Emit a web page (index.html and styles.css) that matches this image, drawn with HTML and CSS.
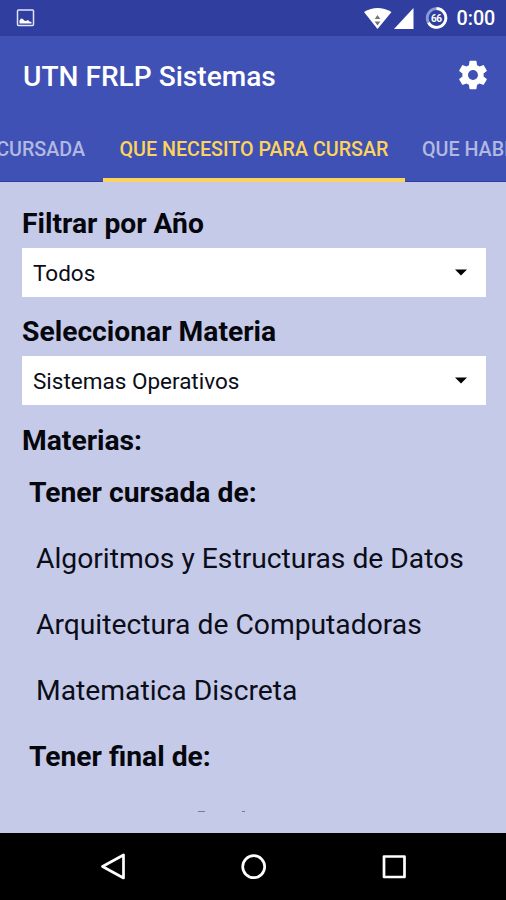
FILE: index.html
```html
<!DOCTYPE html>
<html lang="es">
<head>
<meta charset="utf-8">
<title>UTN FRLP Sistemas</title>
<link rel="stylesheet" href="styles.css">
</head>
<body>
<div class="status">
  <svg class="photo" width="20" height="20" viewBox="0 0 20 20"><rect x="2.500" y="2" width="16" height="15.500" rx="1" fill="none" stroke="#dfe3fb" stroke-width="1.500"/><path d="M4.500 15.500v-3l1.500-2 2 .5 1 1.500 2 .5 2-1 1.500 1.500 2 .5v1.500z" fill="#fff"/></svg>
  <svg class="signals" width="86" height="26" viewBox="0 0 86 26">
    <path d="M0 9Q13.500 1 27.500 9L13.500 26z" fill="#fff"/>
    <path d="M13.500 12l2.800 4h-5.600zM10.700 18.500h5.600l-2.800 4z" fill="#737373"/>
    <path d="M49.500 5v21H30z" fill="#fff"/>
    <circle cx="72.500" cy="15" r="9.300" fill="none" stroke="#8d98d5" stroke-width="2.800"/>
    <path d="M72.500 5.700a9.300 9.300 0 1 1-8 14" fill="none" stroke="#fff" stroke-width="2.800"/>
    <text class="battery" x="72.500" y="19" text-anchor="middle" textLength="11" fill="#fff">66</text>
  </svg>
  <span class="clock">0:00</span>
</div>
<header class="appbar">
  <h1>UTN FRLP Sistemas</h1>
  <svg width="34" height="34" viewBox="0 0 24 24"><path fill="#fff" d="M19.430 12.980c.04-.32.07-.64.07-.98s-.03-.66-.07-.98l2.110-1.650c.19-.15.24-.42.12-.64l-2-3.460c-.12-.22-.39-.3-.61-.22l-2.490 1c-.52-.4-1.080-.73-1.690-.98l-.38-2.650C14.460 2.180 14.250 2 14 2h-4c-.25 0-.46.18-.49.42l-.38 2.650c-.61.25-1.170.59-1.690.98l-2.490-1c-.23-.09-.49 0-.61.22l-2 3.460c-.13.22-.07.49.12.64l2.110 1.650c-.04.32-.07.65-.07.98s.03.66.07.98l-2.110 1.650c-.19.15-.24.42-.12.64l2 3.460c.12.22.39.3.61.22l2.490-1c.52.4 1.080.73 1.690.98l.38 2.650c.03.24.24.42.49.42h4c.25 0 .46-.18.49-.42l.38-2.650c.61-.25 1.170-.59 1.690-.98l2.490 1c.23.09.49 0 .61-.22l2-3.460c.12-.22.07-.49-.12-.64zM12 15.500c-1.930 0-3.500-1.570-3.500-3.500s1.570-3.500 3.500-3.500 3.500 1.570 3.500 3.500-1.570 3.500-3.500 3.500z"/></svg>
</header>
<nav class="tabs">
  <span class="tab first">CURSADA</span>
  <span class="tab active">QUE NECESITO PARA CURSAR</span>
  <span class="tab last">QUE HABILITA</span>
</nav>
<main>
  <h2>Filtrar por Año</h2>
  <div class="select"><span>Todos</span><svg width="12" height="7" viewBox="0 0 12 7"><path d="M0 .5h12L6 6.500z"/></svg></div>
  <h2>Seleccionar Materia</h2>
  <div class="select"><span>Sistemas Operativos</span><svg width="12" height="7" viewBox="0 0 12 7"><path d="M0 .5h12L6 6.500z"/></svg></div>
  <h2 class="subjects">Materias:</h2>
  <h3>Tener cursada de:</h3>
  <p>Algoritmos y Estructuras de Datos</p>
  <p>Arquitectura de Computadoras</p>
  <p>Matematica Discreta</p>
  <h3 class="final">Tener final de:</h3>
  <div class="cut"><i></i><i></i></div>
</main>
<footer>
  <svg width="506" height="67" viewBox="0 0 506 67" fill="none" stroke="#fff" stroke-width="2.700" stroke-linejoin="round"><path d="M102.500 33.500L123.500 22v23z"/><circle cx="253.700" cy="33.700" r="11"/><rect x="384" y="23.500" width="20.500" height="20.500"/></svg>
</footer>
</body>
</html>
```
FILE: styles.css
```css
* { box-sizing: border-box; }
body { margin: 0; width: 506px; height: 900px; overflow: hidden; background: #c5cae9; font-family: Roboto, sans-serif; color: #0b0d18; display: flex; flex-direction: column; }
h1, h2, h3, p { margin: 0; white-space: nowrap; }
svg { display: block; flex: none; }
.status { height: 36px; background: #303f9f; display: flex; align-items: flex-start; color: #fff; flex: none; }
.photo { margin: 8px 0 0 15px; }
.signals { margin: 3px 0 0 328.5px; }
.battery { font-size: 10px; font-weight: 700; }
.clock { margin-left: 7px; font-size: 19.700px; line-height: 38px; font-weight: 500; }
.appbar { height: 82px; flex: none; background: #3f51b5; display: flex; align-items: center; justify-content: space-between; padding: 0 16px 4px 23px; color: #fff; }
h1 { font-size: 28.100px; font-weight: 500; line-height: 36px; padding-top: 3px; }
.tabs { height: 64px; flex: none; background: #3f51b5; display: flex; color: #b2b9e1; font-size: 19.700px; font-weight: 500; white-space: nowrap; overflow: hidden; }
.tab { line-height: 64px; height: 64px; flex: none; border-bottom: 1px solid #303f9f; }
.first { width: 103px; display: flex; justify-content: flex-end; padding-right: 18px; }
.active { width: 302px; text-align: center; color: #fdd45b; border-bottom: 4px solid #fdd45b; }
.last { padding-left: 17px; }
main { height: 651px; flex: none; padding: 24px 20px 0 22px; overflow: hidden; }
h2, h3 { font-size: 28.250px; font-weight: 700; line-height: 36px; color: #05070d; }
.select { height: 49px; margin: 6px 0 17px; background: #fff; display: flex; align-items: center; justify-content: space-between; padding: 0 19px 0 11px; font-size: 22.500px; }
.subjects { margin-top: 18px; }
h3 { padding-left: 7px; margin-top: 16px; }
p { font-size: 28.250px; line-height: 36px; padding-left: 14px; margin-top: 30px; }
.final { margin-top: 30px; }
.cut { display: flex; gap: 37px; margin: 36px 0 0 176px; }
.cut i { width: 7px; height: 1px; background: #777b94; }
.cut i + i { width: 3px; }
footer { flex: 1; background: #000; }
```
